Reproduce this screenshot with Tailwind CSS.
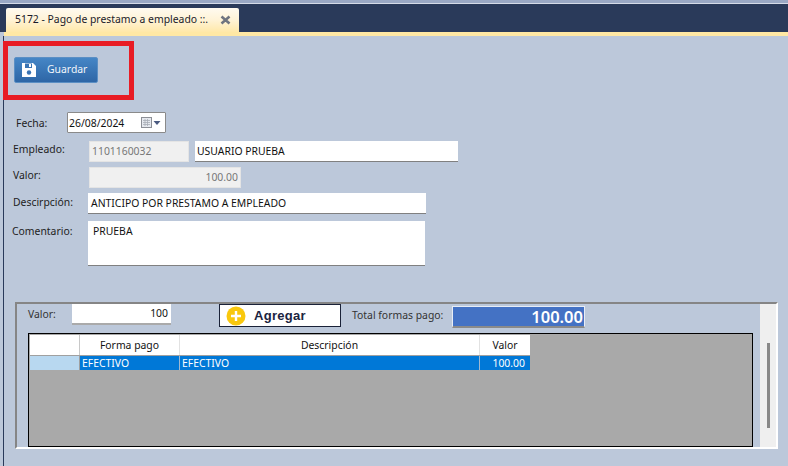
<!DOCTYPE html>
<html>
<head>
<meta charset="utf-8">
<script src="https://cdn.jsdelivr.net/npm/@tailwindcss/browser@4"></script>
</head>
<body class="m-0 w-[788px] h-[466px] overflow-hidden bg-[#bcc8da] font-['Noto_Sans','Liberation_Sans',sans-serif] text-[10.4px] leading-none text-[#111] relative">
<div class="h-[3px] bg-[#9aa8c4]"></div>
<div class="h-px bg-[#d5dbe8]"></div>
<div class="h-[28px] bg-[#2a3a5a] pt-1 pl-[6px]">
  <div class="w-[233px] h-[24px] rounded-t-[2px] bg-gradient-to-b from-[#fffaf0] via-[#fff3d6] to-[#ffe8a8] flex items-center pl-[9px] pr-[8px]">
    <span class="flex-1 text-[#1a1a2a] whitespace-nowrap -translate-y-px">5172 - Pago de prestamo a empleado ::.</span>
    <svg width="11" height="10" viewBox="0 0 11 10"><path d="M1.500 1.500 L9.500 8.500 M9.500 1.500 L1.500 8.500" stroke="#6f7480" stroke-width="2.600"/></svg>
  </div>
</div>
<div class="h-[4px] bg-[#ffe8a4] ml-[4px]"></div>

<div class="absolute left-[3px] top-[36px] bottom-0 w-px bg-[#2a3a5a]"></div>
<div class="absolute left-[3px] top-[41px] w-[131px] h-[59px] border-[5px] border-[#e81c24]"></div>

<main class="pt-[21px] flex flex-col items-start">
  <button class="ml-[14px] w-[84px] h-[26px] rounded-[2px] bg-gradient-to-b from-[#4586c6] to-[#2e66a6] border border-[#5b8fc4] flex items-center text-[#f2f6fb]">
    <svg class="ml-[6px] shrink-0" width="16" height="16" viewBox="0 0 16 16"><path d="M1 1h11l3 3v11H1z" fill="#fff"/><rect x="4" y="1.500" width="7" height="4.500" fill="#3a74b4"/><rect x="8" y="2" width="2" height="3" fill="#fff"/><circle cx="8" cy="10.500" r="2.200" fill="#3a74b4"/></svg>
    <span class="ml-[10px] -translate-y-px">Guardar</span>
  </button>

  <div class="mt-[29px] ml-[16px] flex items-center h-[21px]">
    <label class="w-[51px] text-[#222] translate-y-px">Fecha:</label>
    <div class="w-[99px] h-[21px] bg-white border border-[#8a8a8a] rounded-[1px] flex items-center pl-px">
      <span class="flex-1 translate-y-px">26/08/2024</span>
      <svg class="mr-[3px]" width="21" height="12" viewBox="0 0 21 12"><rect x="0.500" y="0.500" width="10" height="10" fill="#e6e9ef" stroke="#8c8f96"/><path d="M2 3.500h7M2 5.500h7M2 7.500h7M4 2v7M6.500 2v7" stroke="#a8adb6" stroke-width="0.800"/><path d="M12.500 4h7l-3.500 4z" fill="#4a5a80"/></svg>
    </div>
  </div>

  <div class="mt-[8px] ml-[13px] flex items-center h-[21px]">
    <label class="w-[76px] -translate-y-[2px] text-[#222]">Empleado:</label>
    <div class="w-[100px] h-[21px] bg-[#f0f0f0] border border-[#e4e4e4] flex items-center pl-[2px] text-[#777]">1101160032</div>
    <div class="ml-[6px] w-[263px] h-[21px] bg-white border-b-[1.500px] border-b-[#808080] flex items-center pl-[2px]">USUARIO PRUEBA</div>
  </div>

  <div class="mt-[5px] ml-[13px] flex items-center h-[21px]">
    <label class="w-[76px] -translate-y-[2px] text-[#222]">Valor:</label>
    <div class="w-[152px] h-[21px] bg-[#f0f0f0] border border-[#e4e4e4] flex items-center justify-end pr-[2px] text-[#777]">100.00</div>
  </div>

  <div class="mt-[5px] ml-[13px] flex items-center h-[21px]">
    <label class="w-[75px] -translate-y-px text-[#222]">Descirpción:</label>
    <div class="w-[338px] h-[21px] bg-white border-b-[1.500px] border-b-[#808080] flex items-center pl-[3px]">ANTICIPO POR PRESTAMO A EMPLEADO</div>
  </div>

  <div class="mt-[7px] ml-[12px] flex items-start h-[45px]">
    <label class="w-[76px] mt-[5px] text-[#222]">Comentario:</label>
    <div class="w-[337px] h-[45px] bg-white border-b-[1.500px] border-b-[#808080] pl-[5px] pt-[5px]">PRUEBA</div>
  </div>

  <section class="mt-[36px] ml-[15px] w-[763px] h-[147px] border-t-2 border-t-[#858585] border-l-2 border-l-[#858585] border-b-2 border-b-white border-r-2 border-r-white flex">
    <div class="w-[743px] pl-[11px]">
      <div class="flex items-start h-[29px]">
        <label class="w-[44px] mt-[5px] text-[#333]">Valor:</label>
        <div class="w-[99px] h-[21px] bg-white border-b-2 border-b-[#aaa] flex items-center justify-end pr-[3px]">100</div>
        <button class="ml-[48px] w-[122px] h-[23px] bg-white border border-[#1a2238] flex items-center pl-[6px] font-['Liberation_Sans',sans-serif] font-bold text-[13px] text-[#1b2440]">
          <svg width="20" height="20" viewBox="0 0 20 20"><circle cx="10" cy="10" r="9.500" fill="#f9c80e"/><path d="M10 5v10M5 10h10" stroke="#fff" stroke-width="2.400"/></svg>
          <span class="ml-[8px] tracking-[0.3px]">Agregar</span>
        </button>
        <label class="ml-[11px] mt-[6px] w-[100px] text-[#333] whitespace-nowrap">Total formas pago:</label>
        <div class="w-[133px] h-[22px] mt-[2px] bg-[#4472c4] border border-[#e8edf5] border-b-[#8a8a8a] border-b-2 text-white text-[16.500px] font-semibold flex items-center justify-end pr-px"><span class="translate-y-px">100.00</span></div>
      </div>
      <div class="w-[725px] h-[114px] bg-[#a9a9a9] border border-black p-px">
        <div class="flex h-[20px] w-[500px] bg-white">
          <div class="w-[50px] border-r border-[#c8c8c8]"></div>
          <div class="w-[100px] border-r border-[#e2e2e2] flex items-center justify-center">Forma pago</div>
          <div class="w-[300px] border-r border-[#e2e2e2] flex items-center justify-center">Descripción</div>
          <div class="w-[50px] flex items-center justify-center">Valor</div>
        </div>
        <div class="flex h-[15px] w-[500px] border-t border-[#a0a0a0] text-white">
          <div class="w-[50px] bg-[#b8d8f0] border-r border-[#a0a0a0]"></div>
          <div class="w-[100px] bg-[#0078d7] border-r border-[#a0b8d0] pl-[2px] flex items-center">EFECTIVO</div>
          <div class="w-[300px] bg-[#0078d7] border-r border-[#a0b8d0] pl-[2px] flex items-center">EFECTIVO</div>
          <div class="w-[50px] bg-[#0078d7] pr-[5px] flex items-center justify-end">100.00</div>
        </div>
      </div>
    </div>
    <aside class="w-[16px] bg-[#efefef] flex justify-center pt-[39px]">
      <div class="w-[3px] h-[85px] bg-[#888]"></div>
    </aside>
  </section>
</main>
</body>
</html>
